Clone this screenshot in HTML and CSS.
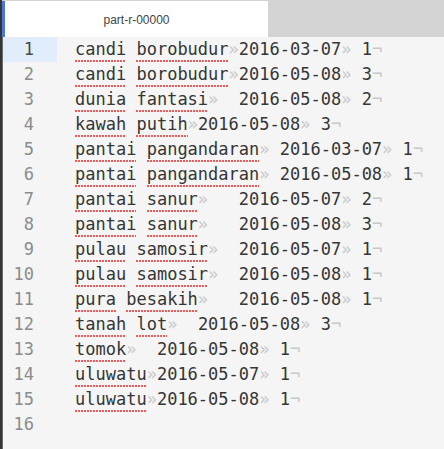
FILE: index.html
```html
<!DOCTYPE html>
<html>
<head>
<meta charset="utf-8">
<link rel="stylesheet" href="styles.css">
</head>
<body>
<div class="window">
  <div class="topbar">
    <div class="tab">part-r-00000</div>
  </div>
  <div class="editor">
    <div class="line active"><div class="num">1</div><div class="code"><span class="w">candi</span> <span class="w">borobudur</span><span class="i">»</span>2016-03-07<span class="i">»</span> 1<span class="i">¬</span></div></div>
    <div class="line"><div class="num">2</div><div class="code"><span class="w">candi</span> <span class="w">borobudur</span><span class="i">»</span>2016-05-08<span class="i">»</span> 3<span class="i">¬</span></div></div>
    <div class="line"><div class="num">3</div><div class="code"><span class="w">dunia</span> <span class="w">fantasi</span><span class="i">»</span>  2016-05-08<span class="i">»</span> 2<span class="i">¬</span></div></div>
    <div class="line"><div class="num">4</div><div class="code"><span class="w">kawah</span> <span class="w">putih</span><span class="i">»</span>2016-05-08<span class="i">»</span> 3<span class="i">¬</span></div></div>
    <div class="line"><div class="num">5</div><div class="code"><span class="w">pantai</span> <span class="w">pangandaran</span><span class="i">»</span> 2016-03-07<span class="i">»</span> 1<span class="i">¬</span></div></div>
    <div class="line"><div class="num">6</div><div class="code"><span class="w">pantai</span> <span class="w">pangandaran</span><span class="i">»</span> 2016-05-08<span class="i">»</span> 1<span class="i">¬</span></div></div>
    <div class="line"><div class="num">7</div><div class="code"><span class="w">pantai</span> <span class="w">sanur</span><span class="i">»</span>   2016-05-07<span class="i">»</span> 2<span class="i">¬</span></div></div>
    <div class="line"><div class="num">8</div><div class="code"><span class="w">pantai</span> <span class="w">sanur</span><span class="i">»</span>   2016-05-08<span class="i">»</span> 3<span class="i">¬</span></div></div>
    <div class="line"><div class="num">9</div><div class="code"><span class="w">pulau</span> <span class="w">samosir</span><span class="i">»</span>  2016-05-07<span class="i">»</span> 1<span class="i">¬</span></div></div>
    <div class="line"><div class="num">10</div><div class="code"><span class="w">pulau</span> <span class="w">samosir</span><span class="i">»</span>  2016-05-08<span class="i">»</span> 1<span class="i">¬</span></div></div>
    <div class="line"><div class="num">11</div><div class="code"><span class="w">pura</span> <span class="w">besakih</span><span class="i">»</span>   2016-05-08<span class="i">»</span> 1<span class="i">¬</span></div></div>
    <div class="line"><div class="num">12</div><div class="code"><span class="w">tanah</span> <span class="w">lot</span><span class="i">»</span>  2016-05-08<span class="i">»</span> 3<span class="i">¬</span></div></div>
    <div class="line"><div class="num">13</div><div class="code"><span class="w">tomok</span><span class="i">»</span>  2016-05-08<span class="i">»</span> 1<span class="i">¬</span></div></div>
    <div class="line"><div class="num">14</div><div class="code"><span class="w">uluwatu</span><span class="i">»</span>2016-05-07<span class="i">»</span> 1<span class="i">¬</span></div></div>
    <div class="line"><div class="num">15</div><div class="code"><span class="w">uluwatu</span><span class="i">»</span>2016-05-08<span class="i">»</span> 1<span class="i">¬</span></div></div>
    <div class="line"><div class="num">16</div><div class="code"></div></div>
  </div>
</div>
</body>
</html>
```
FILE: styles.css
```css
html, body {
  margin: 0;
  padding: 0;
  background: #f5f5f5;
}
.window {
  width: 444px;
  height: 449px;
  overflow: hidden;
  box-sizing: border-box;
  border-left: 2px solid #353535;
  display: flex;
  flex-direction: column;
}
.topbar {
  height: 37px;
  background: #d4d4d4;
  box-sizing: border-box;
  padding-top: 1px;
  display: flex;
  flex-shrink: 0;
}
.tab {
  width: 266px;
  height: 36px;
  box-sizing: border-box;
  background: #ffffff;
  border-left: 3px solid #4a78d6;
  font-family: "Liberation Sans", Arial, sans-serif;
  font-size: 12px;
  color: #444444;
  display: flex;
  align-items: center;
  justify-content: center;
  padding-top: 2px;
}
.editor {
  flex: 1;
  background: #f5f5f5;
  border-left: 1px solid #6a6a6a;
  font-family: "DejaVu Sans Mono", monospace;
  font-size: 17px;
  color: #363636;
}
.line {
  display: flex;
  height: 25px;
  line-height: 25px;
}
.num {
  width: 54px;
  flex-shrink: 0;
  box-sizing: border-box;
  padding-right: 23px;
  text-align: right;
  color: #8c8c8c;
}
.line.active .num {
  background: #e2edfb;
  color: #4a4a4a;
}
.code {
  padding-left: 18px;
  white-space: pre;
}
.w {
  padding-bottom: 3px;
  background-image: linear-gradient(to right, #f45a5a 60%, transparent 60%);
  background-size: 3px 2px;
  background-repeat: repeat-x;
  background-position: left bottom;
}
.i {
  color: #c9c9c9;
}
```
